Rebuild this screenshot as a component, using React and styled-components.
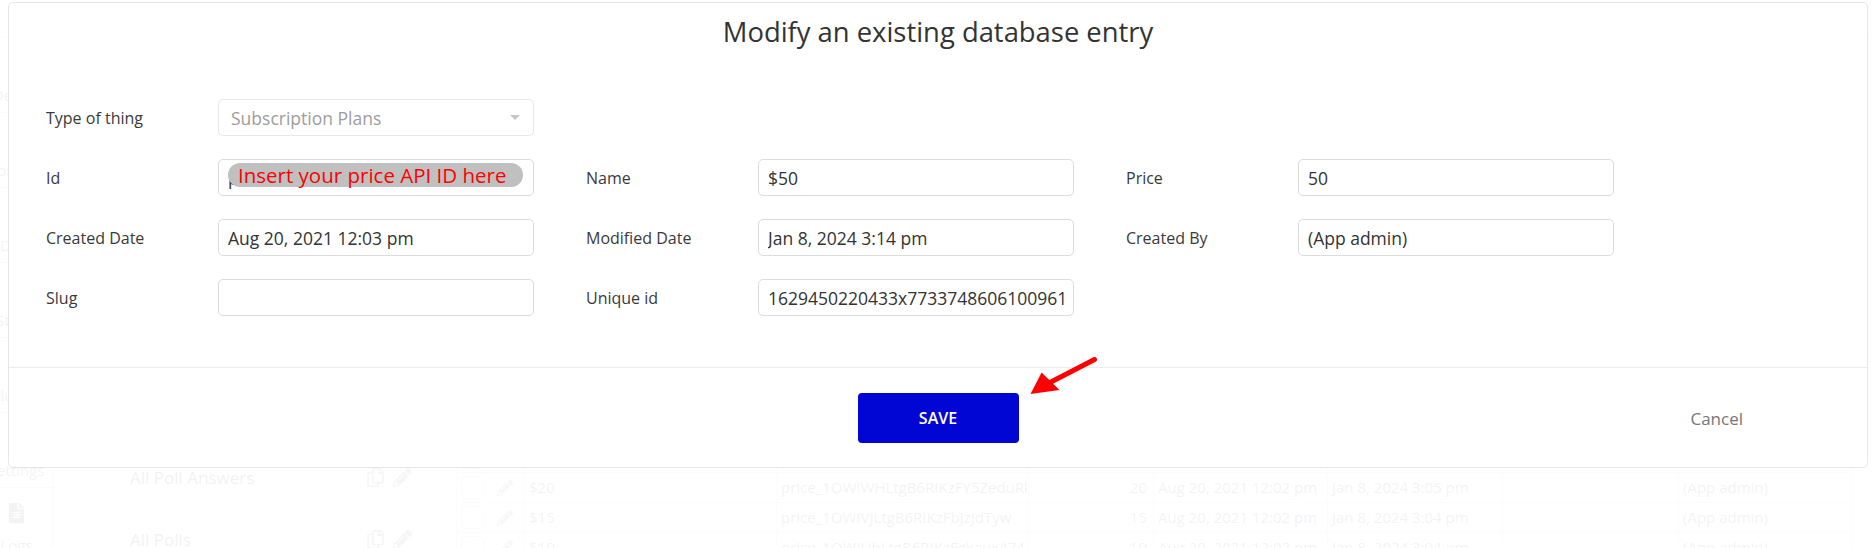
import React from 'react'
import styled, { createGlobalStyle } from 'styled-components'
import { FaCog, FaFileAlt, FaRegCopy, FaPencilAlt, FaDatabase, FaPaintBrush, FaPlug, FaSitemap, FaPenNib } from 'react-icons/fa'

const GlobalStyle = createGlobalStyle`
  html, body {
    margin: 0;
    padding: 0;
  }
  body {
    font-family: 'Open Sans', 'Liberation Sans', sans-serif;
    background: #fff;
  }
  * {
    box-sizing: border-box;
  }
`

const Page = styled.div`
  position: relative;
  width: 1872px;
  height: 548px;
  overflow: hidden;
  background: #fff;
`

/* ---------- editor behind the modal ---------- */

const Editor = styled.div`
  display: flex;
  flex-direction: column;
  height: 100%;
  color: #4d4d4d;
`

const TopBar = styled.div`
  height: 38px;
  flex-shrink: 0;
  border-bottom: 1px solid #d6d6d6;
`

const EditorBody = styled.div`
  display: flex;
  flex: 1;
  min-height: 0;
`

const Sidebar = styled.div`
  width: 54px;
  flex-shrink: 0;
  border-right: 1px solid #cfcfcf;
`

const SideItem = styled.div`
  height: 75px;
  border-bottom: 1px solid #cfcfcf;
  padding: 15px 20px 0 0;
  display: flex;
  flex-direction: column;
  align-items: center;
  color: #6a6a6a;
  svg {
    width: 15px;
    height: 20px;
  }
`

const SideLabel = styled.div`
  margin-top: 12px;
  height: 20px;
  line-height: 20px;
  font-size: 15px;
  white-space: nowrap;
`

const ListPanel = styled.div`
  width: 402px;
  flex-shrink: 0;
  padding: 36px 44px 0 76px;
`

const ListItem = styled.div`
  height: 62px;
  display: flex;
  align-items: center;
  font-size: 17px;
  color: #555;
`

const ListName = styled.span`
  flex: 1;
`

const ListIcons = styled.span`
  display: flex;
  gap: 8px;
  color: #8a8a8a;
  svg {
    width: 19px;
    height: 19px;
  }
`

const TableArea = styled.div`
  flex: 1;
  padding-top: 225px;
`

const Table = styled.div`
  width: 1396px;
  border-left: 1px solid #d4d4d4;
`

const TableRow = styled.div`
  display: grid;
  grid-template-columns: 68px 252px 252px 125px 174px 175px 176px 174px;
  height: 30px;
  border-bottom: 1px solid #d4d4d4;
`

const Cell = styled.div`
  border-right: 1px solid #d4d4d4;
  padding: 0 6px 0 4px;
  font-size: 15px;
  line-height: 29px;
  color: ${p => (p.$head ? '#333' : '#6b5f86')};
  font-weight: ${p => (p.$head ? 600 : 400)};
  text-align: ${p => (p.$right ? 'right' : 'left')};
  white-space: nowrap;
  overflow: hidden;
`

const ActionCell = styled(Cell)`
  display: flex;
  align-items: center;
  gap: 13px;
  color: #a5a5a5;
  svg {
    width: 16px;
    height: 16px;
  }
`

const CheckBox = styled.span`
  width: 23px;
  height: 23px;
  border: 1px solid #c8c8c8;
  border-radius: 5px;
`

const Backdrop = styled.div`
  position: absolute;
  inset: 0;
  background: rgba(255, 255, 255, 0.92);
`

/* ---------- modal ---------- */

const Modal = styled.div`
  position: absolute;
  top: 2px;
  left: 8px;
  width: 1860px;
  height: 466px;
  background: #fff;
  border: 1px solid #e6e6e6;
  border-radius: 5px;
  display: flex;
  flex-direction: column;
`

const Title = styled.h2`
  margin: 0;
  padding-top: 10px;
  font-size: 27.4px;
  line-height: 37px;
  font-weight: 400;
  text-align: center;
  color: #333;
`

const FormGrid = styled.div`
  margin-top: 49px;
  padding: 0 37px;
  display: grid;
  grid-template-columns: repeat(3, 488px);
  column-gap: 52px;
  row-gap: 23px;
`

const Field = styled.div`
  display: grid;
  grid-template-columns: 172px 316px;
  align-items: center;
  height: 37px;
  ${p => (p.$newRow ? 'grid-column: 1;' : '')}
`

const Label = styled.label`
  font-size: 16px;
  color: #3a3a3a;
`

const Input = styled.input`
  width: 316px;
  height: 37px;
  border: 1px solid #dcdcdc;
  border-radius: 5px;
  padding: 0 9px;
  font-family: 'Open Sans', 'Liberation Sans', sans-serif;
  font-size: 17.5px;
  color: #333;
  background: #fff;
  outline: none;
`

const SelectBox = styled.div`
  height: 37px;
  border: 1px solid #e8e8e8;
  border-radius: 5px;
  padding: 0 13px 0 12px;
  display: flex;
  align-items: center;
  justify-content: space-between;
  font-size: 17.5px;
  color: #9d9d9d;
`

const Caret = styled.span`
  width: 0;
  height: 0;
  border-left: 5px solid transparent;
  border-right: 5px solid transparent;
  border-top: 5px solid #c6c6c6;
`

const InputHolder = styled.div`
  position: relative;
  height: 37px;
`

const Note = styled.span`
  position: absolute;
  top: 4px;
  left: 10px;
  width: 295px;
  height: 24px;
  border-radius: 12px;
  background: #c0c0c0;
  padding-left: 10px;
  font-size: 20.5px;
  line-height: 24px;
  color: #ff0000;
  white-space: nowrap;
`

const Footer = styled.div`
  margin-top: auto;
  height: 100px;
  border-top: 1px solid #ececec;
  padding-top: 25px;
  display: grid;
  grid-template-columns: 1fr auto 1fr;
  align-items: start;
`

const SaveButton = styled.button`
  grid-column: 2;
  width: 161px;
  height: 50px;
  border: none;
  border-radius: 4px;
  background: #0206d4;
  color: #fff;
  font-family: 'Open Sans', 'Liberation Sans', sans-serif;
  font-size: 16px;
  font-weight: 600;
`

const CancelLink = styled.span`
  justify-self: end;
  margin-right: 124px;
  padding-top: 14px;
  font-size: 17px;
  color: #777;
`

const Arrow = styled.svg`
  position: absolute;
  left: 1022px;
  top: 352px;
  width: 80px;
  height: 48px;
`

const sideItems = [
  { icon: <FaPenNib />, label: 'Design' },
  { icon: <FaSitemap />, label: 'Workflow' },
  { icon: <FaDatabase />, label: 'Data' },
  { icon: <FaPaintBrush />, label: 'Styles' },
  { icon: <FaPlug />, label: 'Plugins' },
  { icon: <FaCog />, label: 'Settings' },
  { icon: <FaFileAlt />, label: 'Logs' },
]

const lists = [
  'All Users',
  'All Subscription Plans',
  'All Payments',
  'All Options',
  'All Poll Categories',
  'All Poll Questions',
  'All Poll Answers',
  'All Polls',
]

const rows = [
  ['$100', 'price_1OWIaKLtgB6RIKzFkP2sQxwA', '100', 'Aug 20, 2021 12:02 pm', 'Jan 8, 2024 3:06 pm'],
  ['$75', 'price_1OWIZrLtgB6RIKzFq8dXbLmE', '75', 'Aug 20, 2021 12:02 pm', 'Jan 8, 2024 3:06 pm'],
  ['$50', 'price_1OWIZ2LtgB6RIKzF0cVtNqYp', '50', 'Aug 20, 2021 12:03 pm', 'Jan 8, 2024 3:14 pm'],
  ['$40', 'price_1OWIYgLtgB6RIKzFsWm3kTrH', '40', 'Aug 20, 2021 12:02 pm', 'Jan 8, 2024 3:05 pm'],
  ['$30', 'price_1OWIXsLtgB6RIKzFd7GhUePo', '30', 'Aug 20, 2021 12:02 pm', 'Jan 8, 2024 3:05 pm'],
  ['$25', 'price_1OWIXALtgB6RIKzFnZb4CjWs', '25', 'Aug 20, 2021 12:02 pm', 'Jan 8, 2024 3:05 pm'],
  ['$20', 'price_1OWIWHLtgB6RIKzFY5ZeduRl', '20', 'Aug 20, 2021 12:02 pm', 'Jan 8, 2024 3:05 pm'],
  ['$15', 'price_1OWIVJLtgB6RIKzFbJzJdTyw', '15', 'Aug 20, 2021 12:02 pm', 'Jan 8, 2024 3:04 pm'],
  ['$10', 'price_1OWIUbLtgB6RIKzFgkaux474', '10', 'Aug 20, 2021 12:02 pm', 'Jan 8, 2024 3:04 pm'],
]

const App = () => {
  return (
    <>
      <GlobalStyle />
      <Page>
        <Editor>
          <TopBar />
          <EditorBody>
            <Sidebar>
              {sideItems.map(s => (
                <SideItem key={s.label}>
                  {s.icon}
                  <SideLabel>{s.label}</SideLabel>
                </SideItem>
              ))}
            </Sidebar>
            <ListPanel>
              {lists.map(name => (
                <ListItem key={name}>
                  <ListName>{name}</ListName>
                  <ListIcons>
                    <FaRegCopy />
                    <FaPencilAlt />
                  </ListIcons>
                </ListItem>
              ))}
            </ListPanel>
            <TableArea>
              <Table>
                <TableRow>
                  <Cell $head />
                  <Cell $head>Name</Cell>
                  <Cell $head>Id</Cell>
                  <Cell $head>Price</Cell>
                  <Cell $head>Created Date</Cell>
                  <Cell $head>Modified Date</Cell>
                  <Cell $head>Slug</Cell>
                  <Cell $head>Creator</Cell>
                </TableRow>
                {rows.map(r => (
                  <TableRow key={r[0]}>
                    <ActionCell>
                      <CheckBox />
                      <FaPencilAlt />
                    </ActionCell>
                    <Cell>{r[0]}</Cell>
                    <Cell>{r[1]}</Cell>
                    <Cell $right>{r[2]}</Cell>
                    <Cell>{r[3]}</Cell>
                    <Cell>{r[4]}</Cell>
                    <Cell />
                    <Cell>(App admin)</Cell>
                  </TableRow>
                ))}
              </Table>
            </TableArea>
          </EditorBody>
        </Editor>

        <Backdrop />

        <Modal>
          <Title>Modify an existing database entry</Title>
          <FormGrid>
            <Field>
              <Label>Type of thing</Label>
              <SelectBox>
                Subscription Plans
                <Caret />
              </SelectBox>
            </Field>
            <Field $newRow>
              <Label>Id</Label>
              <InputHolder>
                <Input readOnly value="price" />
                <Note>Insert your price API ID here</Note>
              </InputHolder>
            </Field>
            <Field>
              <Label>Name</Label>
              <Input readOnly value="$50" />
            </Field>
            <Field>
              <Label>Price</Label>
              <Input readOnly value="50" />
            </Field>
            <Field>
              <Label>Created Date</Label>
              <Input readOnly value="Aug 20, 2021 12:03 pm" />
            </Field>
            <Field>
              <Label>Modified Date</Label>
              <Input readOnly value="Jan 8, 2024 3:14 pm" />
            </Field>
            <Field>
              <Label>Created By</Label>
              <Input readOnly value="(App admin)" />
            </Field>
            <Field>
              <Label>Slug</Label>
              <Input readOnly value="" />
            </Field>
            <Field>
              <Label>Unique id</Label>
              <Input readOnly value="1629450220433x773374860610096128" />
            </Field>
          </FormGrid>
          <Footer>
            <SaveButton>SAVE</SaveButton>
            <CancelLink>Cancel</CancelLink>
          </Footer>
        </Modal>

        <Arrow viewBox="0 0 80 48">
          <line x1="72.5" y1="7.5" x2="27" y2="31" stroke="#ff0000" strokeWidth="5" strokeLinecap="round" />
          <polygon points="8.5,42 19.6,20.5 37.5,38" fill="#ff0000" />
        </Arrow>
      </Page>
    </>
  )
}

export default App
